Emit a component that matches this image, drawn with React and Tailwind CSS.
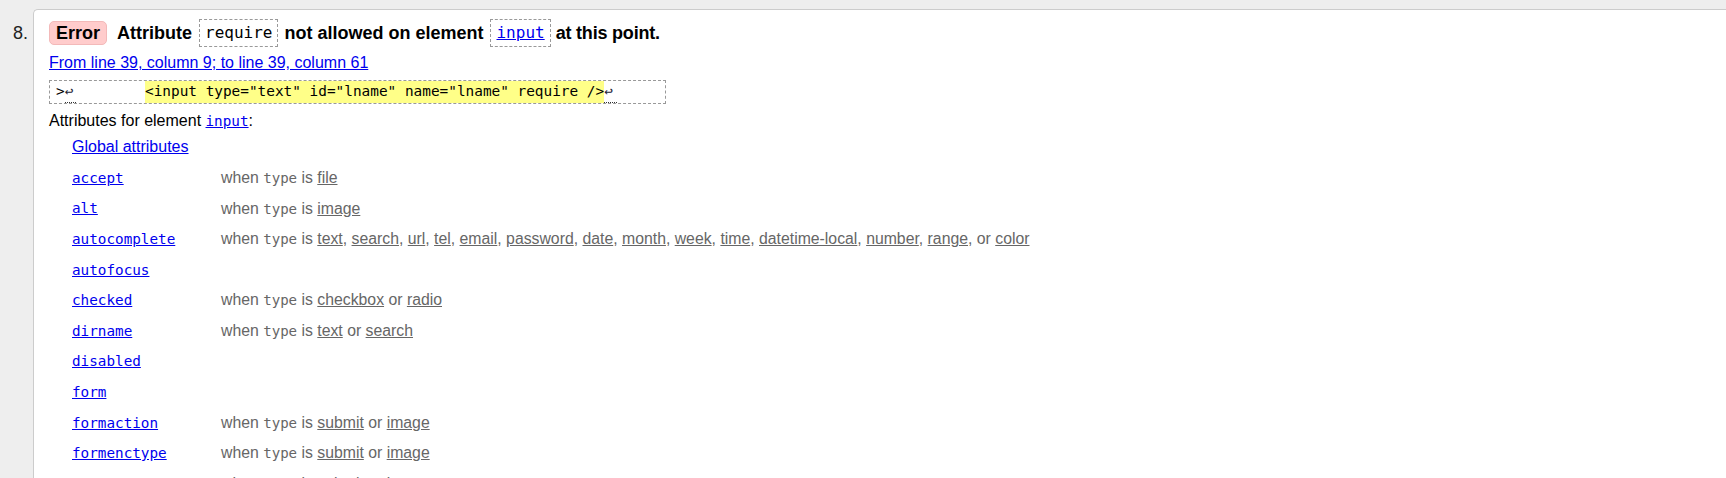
import React from "react";

const rows = [
  ["accept", ["file"]],
  ["alt", ["image"]],
  [
    "autocomplete",
    ["text", "search", "url", "tel", "email", "password", "date", "month", "week", "time", "datetime-local", "number", "range", "color"],
  ],
  ["autofocus", null],
  ["checked", ["checkbox", "radio"]],
  ["dirname", ["text", "search"]],
  ["disabled", null],
  ["form", null],
  ["formaction", ["submit", "image"]],
  ["formenctype", ["submit", "image"]],
  ["formmethod", ["submit", "image"]],
  ["formnovalidate", ["submit", "image"]],
];

function Values({ vals }) {
  if (vals.length === 1) {
    return <span className="underline">{vals[0]}</span>;
  }
  if (vals.length === 2) {
    return (
      <>
        <span className="underline">{vals[0]}</span> or <span className="underline">{vals[1]}</span>
      </>
    );
  }
  return (
    <>
      {vals.map((v, i) => (
        <React.Fragment key={v}>
          {i === vals.length - 1 ? "or " : ""}
          <span className="underline">{v}</span>
          {i < vals.length - 1 ? ", " : ""}
        </React.Fragment>
      ))}
    </>
  );
}

export default function App() {
  const mono = "font-['DejaVu_Sans_Mono','Liberation_Mono',monospace]";
  return (
    <div className="h-[478px] overflow-hidden bg-[#eee] flex pt-[9px] font-['Liberation_Sans',Arial,sans-serif] text-black">
      <div className="w-[33px] shrink-0 pr-[5px] pt-[10px] text-right">
        <div className="h-[28px] leading-[28px] text-[18px] text-[#222]">8.</div>
      </div>
      <div className="flex-1 bg-white border-l border-t border-[#ccc] rounded-tl-[5px] pl-[15px] pt-[9px]">
        <div className="h-[28px] flex items-center text-[18px] font-bold whitespace-nowrap">
          <span className="h-[24px] flex items-center px-[6px] rounded-[5px] bg-[#fcc] border border-[#f3b9b9]">Error</span>
          <span className="ml-[10px]">Attribute</span>
          <span className={`ml-[7px] h-[28px] flex items-center px-[5px] border border-dashed border-[#999] font-normal text-[16px] ${mono}`}>
            require
          </span>
          <span className="ml-[6px]">not allowed on element</span>
          <span className={`ml-[7px] h-[28px] flex items-center px-[5px] border border-dashed border-[#999] font-normal text-[16px] ${mono}`}>
            <a className="text-[#00e] underline">input</a>
          </span>
          <span className="ml-[5px] tracking-[-0.2px]">at this point.</span>
        </div>
        <div className="mt-[5px] leading-[22px] text-[16px]">
          <a className="text-[#00e] underline">From line 39, column 9; to line 39, column 61</a>
        </div>
        <div className={`mt-[6px] w-[617px] h-[24px] border border-dashed border-[#999] flex items-center pl-[6px] text-[14.4px] whitespace-pre ${mono}`}>
          <span>&gt;</span>
          <span className="inline-block w-[11px] border-b border-dotted border-[#333] text-[#223]">↩</span>
          <span>{"        "}</span>
          <span className="bg-[#ff8]">{'<input type="text" id="lname" name="lname" require />'}</span>
          <span className="inline-block w-[13px] border-b border-dotted border-[#333] text-[#223]">↩</span>
        </div>
        <div className="mt-[7px] leading-[20px] text-[16px]">
          Attributes for element <a className={`text-[#00e] underline text-[14.3px] ${mono}`}>input</a>:
        </div>
        <div className="pl-[23px]">
          <div className="h-[31.5px] flex items-center text-[16px]">
            <a className="text-[#00e] underline">Global attributes</a>
          </div>
          {rows.map(([name, vals]) => (
            <div key={name} className="h-[30.6px] flex items-center whitespace-nowrap">
              <div className="w-[149px] shrink-0">
                <a className={`text-[#00e] underline text-[14.3px] ${mono}`}>{name}</a>
              </div>
              {vals && (
                <div className="text-[15.8px] text-[#666]">
                  when <span className={`text-[14.1px] ${mono}`}>type</span> is <Values vals={vals} />
                </div>
              )}
            </div>
          ))}
        </div>
      </div>
    </div>
  );
}
